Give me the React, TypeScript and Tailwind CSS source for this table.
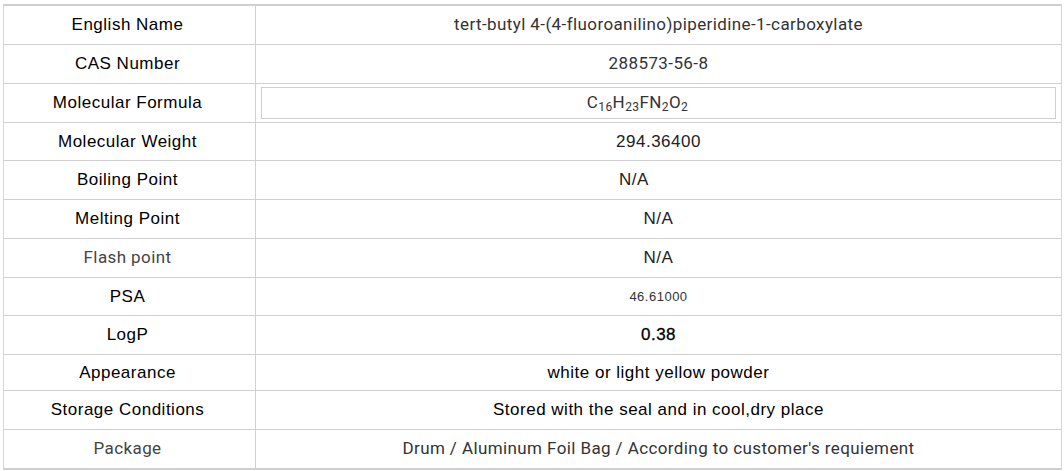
import React from "react";

const arial = "font-['Liberation_Sans',Arial,sans-serif] text-[17px] tracking-[0.5px]";
const roboto = "font-['Roboto','Liberation_Sans',sans-serif] text-[17px] tracking-[0.4px]";

type Row = { label: React.ReactNode; value: React.ReactNode; h: string };

export default function App() {
  const rows: Row[] = [
    {
      label: <span className={`${arial} text-black`}>English Name</span>,
      value: <span className={`${roboto} text-[#333]`}>tert-butyl 4-(4-fluoroanilino)piperidine-1-carboxylate</span>,
      h: "h-[38px]",
    },
    {
      label: <span className={`${arial} text-black`}>CAS Number</span>,
      value: <span className={`${roboto} text-[#333]`}>288573-56-8</span>,
      h: "h-[39px]",
    },
    {
      label: <span className={`${arial} text-black`}>Molecular Formula</span>,
      value: (
        <div className="mx-[5px] flex h-[32px] items-center justify-center border border-[#cfcfcf] pr-[42px]">
          <span className={`${roboto} text-[#333]`}>
            C<sub className="text-[12px]">16</sub>H<sub className="text-[12px]">23</sub>FN<sub className="text-[12px]">2</sub>O<sub className="text-[12px]">2</sub>
          </span>
        </div>
      ),
      h: "h-[39px]",
    },
    {
      label: <span className={`${arial} text-black`}>Molecular Weight</span>,
      value: <span className={`${arial} text-[#222]`}>294.36400</span>,
      h: "h-[38px]",
    },
    {
      label: <span className={`${arial} text-black`}>Boiling Point</span>,
      value: <span className={`${arial} text-[#222] pr-[49px]`}>N/A</span>,
      h: "h-[39px]",
    },
    {
      label: <span className={`${arial} text-black`}>Melting Point</span>,
      value: <span className={`${arial} text-[#222]`}>N/A</span>,
      h: "h-[39px]",
    },
    {
      label: <span className={`${roboto} text-[#444]`}>Flash point</span>,
      value: <span className={`${arial} text-[#222]`}>N/A</span>,
      h: "h-[39px]",
    },
    {
      label: <span className={`${arial} text-black`}>PSA</span>,
      value: <span className="font-['Liberation_Sans',Arial,sans-serif] text-[13px] tracking-[0.5px] text-[#333]">46.61000</span>,
      h: "h-[38px]",
    },
    {
      label: <span className={`${arial} text-black`}>LogP</span>,
      value: <span className={`${arial} text-black [-webkit-text-stroke:0.3px_black]`}>0.38</span>,
      h: "h-[39px]",
    },
    {
      label: <span className={`${arial} text-black`}>Appearance</span>,
      value: <span className={`${arial} text-black`}>white or light yellow powder</span>,
      h: "h-[36px]",
    },
    {
      label: <span className={`${arial} text-black`}>Storage Conditions</span>,
      value: <span className={`${arial} text-black`}>Stored with the seal and in cool,dry place</span>,
      h: "h-[39px]",
    },
    {
      label: <span className={`${roboto} text-[#444]`}>Package</span>,
      value: <span className={`${roboto} text-[#333]`}>Drum / Aluminum Foil Bag / According to customer's requiement</span>,
      h: "h-[39px]",
    },
  ];

  return (
    <div className="h-[471px] w-[1064px] bg-white pt-[4px] pl-[3px]">
      <div className="w-[1059px] border-x border-y-2 border-x-[#d6d6d6] border-y-[#cfcfcf]">
        {rows.map((r, i) => (
          <div
            key={i}
            className={`flex ${r.h} ${i > 0 ? "border-t border-[#d0d0d0]" : ""}`}
          >
            <div className="flex w-[252px] shrink-0 items-center justify-center border-r border-[#d0d0d0] pr-[4px]">
              {r.label}
            </div>
            <div className="flex flex-1 items-center justify-center">
              {i === 2 ? <div className="w-full">{r.value}</div> : r.value}
            </div>
          </div>
        ))}
      </div>
    </div>
  );
}
